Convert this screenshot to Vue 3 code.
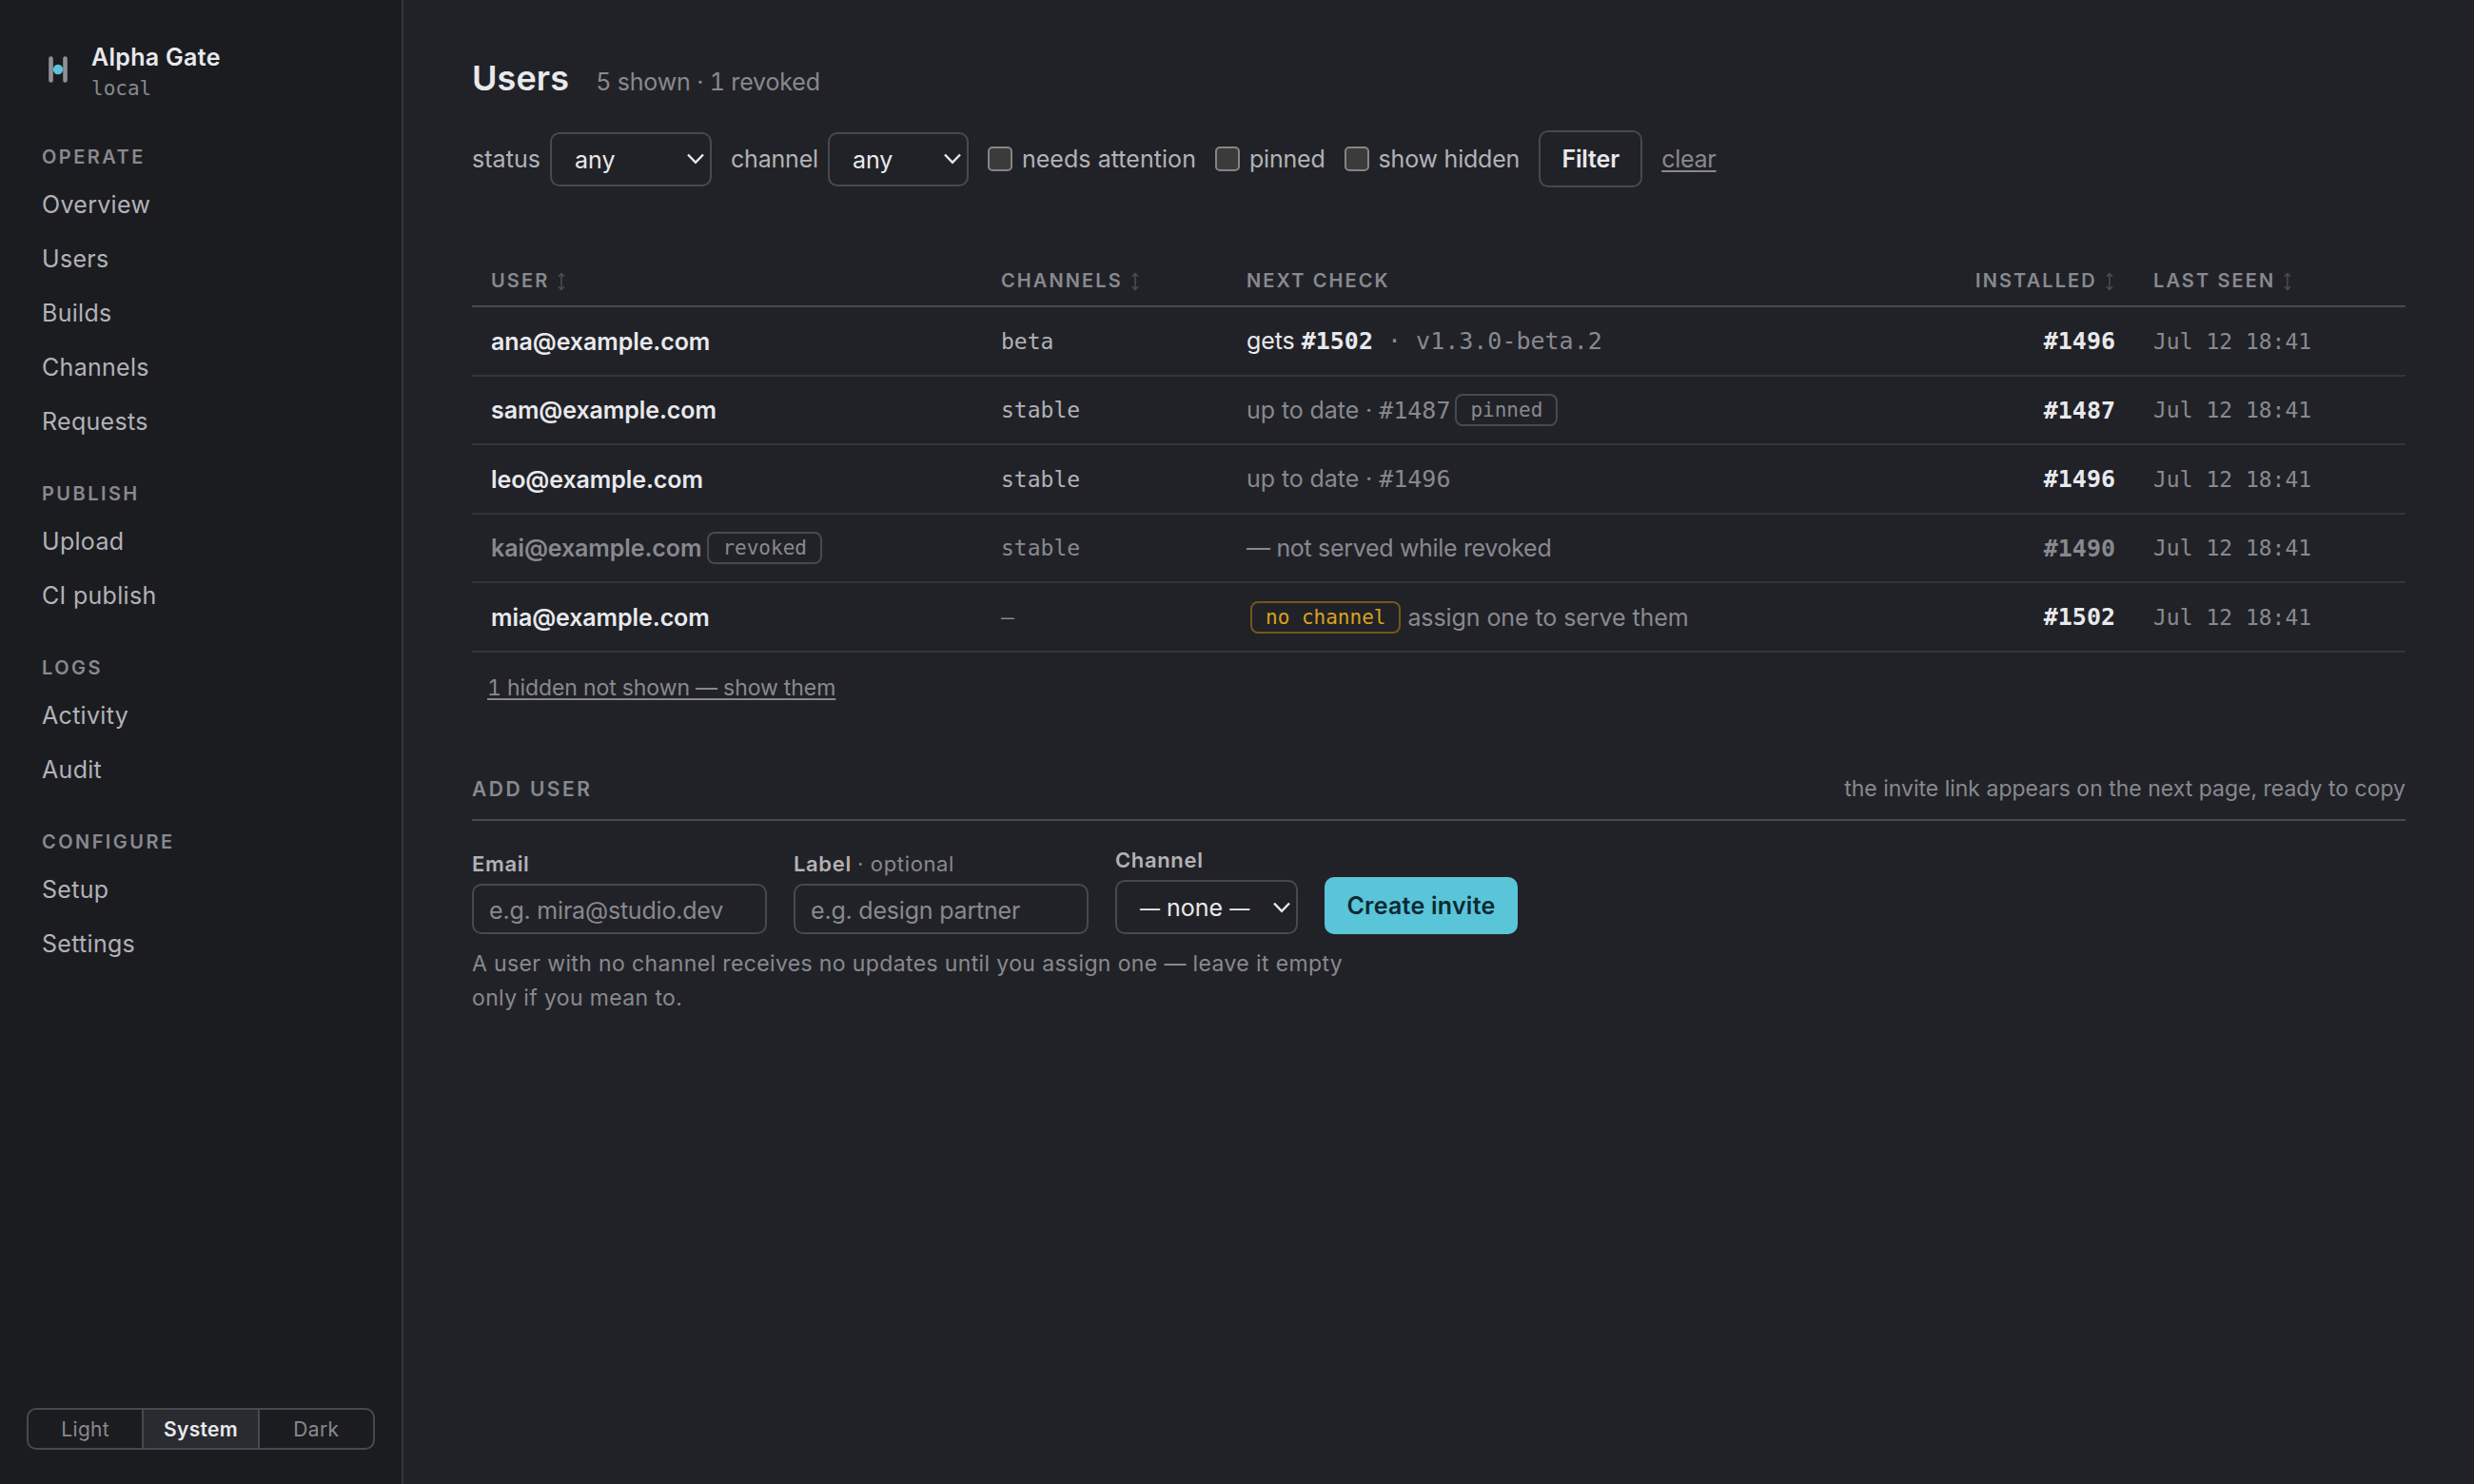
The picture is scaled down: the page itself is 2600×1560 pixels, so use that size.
<script setup>
import { ref } from 'vue'

const groups = [
  { title: 'Operate', links: ['Overview', 'Users', 'Builds', 'Channels', 'Requests'] },
  { title: 'Publish', links: ['Upload', 'CI publish'] },
  { title: 'Logs', links: ['Activity', 'Audit'] },
  { title: 'Configure', links: ['Setup', 'Settings'] },
]

const themes = ['Light', 'System', 'Dark']
const theme = ref('System')

const flags = ref([
  { text: 'needs attention', on: false },
  { text: 'pinned', on: false },
  { text: 'show hidden', on: false },
])

const columns = [
  { text: 'User', sort: true },
  { text: 'Channels', sort: true },
  { text: 'Next check' },
  { text: 'Installed', sort: true, right: true },
  { text: 'Last seen', sort: true },
]

const users = [
  { email: 'ana@example.com', channel: 'beta', next: 'gets', build: '#1502', version: 'v1.3.0-beta.2', installed: '#1496' },
  { email: 'sam@example.com', channel: 'stable', next: 'current', build: '#1487', pinned: true, installed: '#1487' },
  { email: 'leo@example.com', channel: 'stable', next: 'current', build: '#1496', installed: '#1496' },
  { email: 'kai@example.com', channel: 'stable', next: 'revoked', revoked: true, installed: '#1490' },
  { email: 'mia@example.com', channel: '', next: 'none', installed: '#1502' },
]
const lastSeen = 'Jul 12 18:41'

const email = ref('')
const label = ref('')
</script>

<template>
  <div class="app">
    <aside class="sidebar">
      <div class="brand">
        <svg class="logo" width="34" height="34" viewBox="0 0 34 34">
          <path d="M9.5 5.6v22.8M24.5 5.6v22.8" stroke="#8f9097" stroke-width="4.6" stroke-linecap="round" />
          <circle cx="17" cy="17" r="5.2" fill="#5ac4d8" />
        </svg>
        <div>
          <div class="brand-name">Alpha Gate</div>
          <div class="brand-env">local</div>
        </div>
      </div>

      <nav>
        <div v-for="group in groups" :key="group.title" class="group">
          <div class="group-title">{{ group.title }}</div>
          <a v-for="link in group.links" :key="link" class="link">{{ link }}</a>
        </div>
      </nav>

      <div class="themes">
        <button v-for="t in themes" :key="t" :class="{ on: t === theme }" @click="theme = t">{{ t }}</button>
      </div>
    </aside>

    <main class="main">
      <header class="head">
        <h1>Users</h1>
        <span class="count">5 shown · 1 revoked</span>
      </header>

      <div class="filters">
        <div class="pair">
          <span>status</span>
          <div class="select status">
            any
            <svg width="20" height="12" viewBox="0 0 20 12"><path d="M2 1.5l8 8.3 8-8.3" /></svg>
          </div>
        </div>
        <div class="pair tight">
          <span>channel</span>
          <div class="select channel">
            any
            <svg width="20" height="12" viewBox="0 0 20 12"><path d="M2 1.5l8 8.3 8-8.3" /></svg>
          </div>
        </div>
        <label v-for="(flag, i) in flags" :key="flag.text" class="pair" :class="{ tight: i > 0 }">
          <input v-model="flag.on" type="checkbox">
          <span>{{ flag.text }}</span>
        </label>
        <button class="filter">Filter</button>
        <a class="clear">clear</a>
      </div>

      <table>
        <colgroup>
          <col class="c-user"><col class="c-channel"><col class="c-next"><col class="c-inst"><col>
        </colgroup>
        <thead>
          <tr>
            <th v-for="col in columns" :key="col.text" :class="{ right: col.right }">
              {{ col.text }}
              <svg v-if="col.sort" width="8" height="20" viewBox="0 0 8 20"><path d="M4 1.5v17M1 4.8l3-3.3 3 3.3M1 15.2l3 3.3 3-3.3" /></svg>
            </th>
          </tr>
        </thead>
        <tbody>
          <tr v-for="user in users" :key="user.email" :class="{ revoked: user.revoked }">
            <td>
              <span class="email">{{ user.email }}</span>
              <span v-if="user.revoked" class="tag after">revoked</span>
            </td>
            <td class="mono small" :class="{ empty: !user.channel }">{{ user.channel || '–' }}</td>
            <td v-if="user.next === 'gets'">gets <b class="mono">{{ user.build }}</b><span class="mono muted version"> · {{ user.version }}</span></td>
            <td v-else-if="user.next === 'current'" class="muted">up to date · <span class="mono">{{ user.build }}</span><span v-if="user.pinned" class="tag pin">pinned</span></td>
            <td v-else-if="user.next === 'revoked'" class="muted unserved">— not served while revoked</td>
            <td v-else class="muted"><span class="tag warn">no channel</span> assign one to serve them</td>
            <td class="right"><b class="mono">{{ user.installed }}</b></td>
            <td class="mono small muted">{{ lastSeen }}</td>
          </tr>
        </tbody>
      </table>
      <a class="hidden-link">1 hidden not shown — show them</a>

      <section class="add">
        <div class="add-head">
          <h2>Add user</h2>
          <span>the invite link appears on the next page, ready to copy</span>
        </div>
        <form class="form" @submit.prevent>
          <label class="field">
            <span class="name">Email</span>
            <input v-model="email" type="text" placeholder="e.g. mira@studio.dev">
          </label>
          <label class="field">
            <span class="name">Label <em>· optional</em></span>
            <input v-model="label" type="text" placeholder="e.g. design partner">
          </label>
          <div class="field">
            <span class="name">Channel</span>
            <div class="select invite">
              <span><small>—</small> none <small>—</small></span>
              <svg width="20" height="12" viewBox="0 0 20 12"><path d="M2 1.5l8 8.3 8-8.3" /></svg>
            </div>
          </div>
          <button class="create">Create invite</button>
        </form>
        <p class="hint">A user with no channel receives no updates until you assign one — leave it empty only if you mean to.</p>
      </section>
    </main>
  </div>
</template>

<style>
body {
  margin: 0;
  background: #212227;
}
</style>

<style scoped>
* {
  box-sizing: border-box;
}
.app {
  display: flex;
  height: 1560px;
  font-family: Inter, sans-serif;
  font-size: 25px;
  letter-spacing: 0.3px;
  line-height: 38px;
  font-variation-settings: 'opsz' 14;
  color: #e8e9ed;
  background: #212227;
}
button, input {
  font: inherit;
  letter-spacing: inherit;
  font-variation-settings: inherit;
  color: inherit;
}
.mono {
  font-family: 'DejaVu Sans Mono', monospace;
  letter-spacing: 0;
}
.small {
  font-size: 23px;
}
.muted {
  color: #88898f;
}

/* sidebar */
.sidebar {
  display: flex;
  flex-direction: column;
  width: 424px;
  padding: 44px 28px 36px;
  background: #1b1c20;
  border-right: 2px solid #34353a;
}
.brand {
  display: flex;
  gap: 18px;
  padding-left: 16px;
}
.logo {
  margin-top: 12px;
}
.brand-name {
  font-weight: 600;
  line-height: 33px;
}
.brand-env {
  font-family: 'DejaVu Sans Mono', monospace;
  font-size: 21px;
  line-height: 32px;
  letter-spacing: 0;
  color: #88898f;
}
nav {
  flex: 1;
  margin-top: 9px;
  padding-left: 16px;
}
.group-title {
  margin: 32px 0 7px;
  font-size: 20px;
  font-weight: 600;
  line-height: 30px;
  letter-spacing: 2.45px;
  text-transform: uppercase;
  color: #88898f;
}
.link {
  display: block;
  line-height: 57px;
  color: #b1b2b7;
}
.themes {
  display: flex;
  width: 366px;
  height: 44px;
  border: 2px solid #48494f;
  border-radius: 10px;
  overflow: hidden;
}
.themes button {
  flex: 1;
  padding: 1px 0 0;
  border: 0;
  font-size: 21px;
  line-height: 39px;
  color: #88898f;
  background: none;
}
.themes button + button {
  border-left: 2px solid #48494f;
}
.themes .on {
  font-weight: 600;
  color: #e8e9ed;
  background: #2a2b30;
}

/* page head and filters */
.main {
  flex: 1;
  padding: 58px 72px 0;
}
.head {
  display: flex;
  align-items: baseline;
  gap: 28px;
  height: 48px;
}
h1 {
  margin: 0;
  font-size: 36px;
  font-weight: 600;
  line-height: 48px;
  letter-spacing: 0.1px;
}
.count {
  letter-spacing: -0.17px;
  font-variant-numeric: tabular-nums;
  color: #88898f;
}
.filters {
  display: flex;
  align-items: center;
  gap: 20px;
  height: 60px;
  margin-top: 31px;
  letter-spacing: 0.05px;
  color: #b1b2b7;
}
.pair {
  display: flex;
  align-items: center;
  gap: 10px;
}
.tight {
  letter-spacing: -0.2px;
}
.select {
  display: flex;
  align-items: center;
  justify-content: space-between;
  height: 57px;
  padding: 2px 5px 0 24px;
  border: 2px solid #48494f;
  border-radius: 10px;
  letter-spacing: 0;
  color: #e8e9ed;
}
.select svg {
  margin-top: -2px;
  fill: none;
  stroke: #e8e9ed;
  stroke-width: 2.4;
}
.status {
  width: 170px;
}
.channel {
  width: 148px;
}
.filters input {
  width: 26px;
  height: 26px;
  margin: 0;
  appearance: none;
  background: #3b3b3b;
  border: 2px solid #858585;
  border-radius: 5px;
}
.filter {
  width: 109px;
  height: 60px;
  padding: 0;
  font-weight: 600;
  letter-spacing: -0.15px;
  color: #e8e9ed;
  background: none;
  border: 2px solid #48494f;
  border-radius: 10px;
}
.clear, .hidden-link {
  color: #88898f;
  text-decoration: underline;
  text-decoration-thickness: 2px;
  text-underline-offset: 3px;
}
.clear {
  letter-spacing: -0.25px;
}

/* table */
table {
  width: 2032px;
  margin-top: 66px;
  border-collapse: separate;
  border-spacing: 0;
  table-layout: fixed;
}
.c-user {
  width: 536px;
}
.c-channel {
  width: 258px;
}
.c-next {
  width: 719px;
}
.c-inst {
  width: 234px;
}
th {
  height: 60px;
  padding: 5px 20px 0;
  font-size: 20px;
  font-weight: 600;
  line-height: 30px;
  letter-spacing: 2.1px;
  text-align: left;
  text-transform: uppercase;
  color: #88898f;
  border-bottom: 2px solid #48494f;
}
th svg {
  margin: 0 2px;
  vertical-align: -4px;
  fill: none;
  stroke: #4c4d53;
  stroke-width: 1.5;
}
td {
  height: 73px;
  padding: 0 20px;
  letter-spacing: -0.08px;
  white-space: nowrap;
  border-bottom: 2px solid #34353a;
}
tr:nth-child(even) td {
  height: 72px;
}
.right {
  text-align: right;
}
.email {
  font-weight: 600;
}
td.small {
  letter-spacing: 0;
  color: #b1b2b7;
}
td.muted, td.empty, .revoked td {
  color: #88898f;
}
td.unserved {
  letter-spacing: -0.32px;
}
.version {
  white-space: pre;
}
.tag {
  display: inline-block;
  height: 34px;
  margin-left: 4px;
  padding: 0 14px;
  font-family: 'DejaVu Sans Mono', monospace;
  font-size: 21px;
  line-height: 30px;
  letter-spacing: 0;
  vertical-align: 2px;
  color: #88898f;
  border: 2px solid #48494f;
  border-radius: 8px;
}
.tag.after {
  margin-left: 6px;
}
.tag.pin {
  margin-left: 5px;
}
.tag.warn {
  color: #d9a21e;
  border-color: #705819;
}
.hidden-link {
  display: block;
  width: fit-content;
  margin: 18px 0 0 16px;
  font-size: 23px;
  letter-spacing: -0.07px;
  font-variant-numeric: tabular-nums;
}

/* add user */
.add-head {
  display: flex;
  justify-content: space-between;
  height: 53px;
  margin-top: 68px;
  font-size: 23px;
  letter-spacing: 0;
  color: #88898f;
  border-bottom: 2px solid #48494f;
}
h2 {
  margin: 1px 0 0;
  font-size: 21px;
  font-weight: 600;
  letter-spacing: 2.5px;
  text-transform: uppercase;
}
.form {
  display: flex;
  align-items: flex-end;
  gap: 28px;
  height: 119px;
}
.field {
  display: flex;
  flex-direction: column;
  gap: 5px;
}
.name {
  font-size: 22px;
  font-weight: 600;
  line-height: 32px;
  letter-spacing: 0.65px;
  color: #b1b2b7;
}
.name em {
  font-style: normal;
  font-weight: 400;
  color: #88898f;
}
.field input {
  width: 310px;
  height: 53px;
  padding: 2px 16px 0;
  letter-spacing: -0.2px;
  background: none;
  border: 2px solid #48494f;
  border-radius: 10px;
}
.field input::placeholder {
  color: #88898f;
  opacity: 1;
}
.invite {
  width: 192px;
  white-space: nowrap;
}
.invite small {
  font-size: 21px;
}
.create {
  width: 203px;
  height: 60px;
  padding: 0;
  font-weight: 600;
  letter-spacing: 0.25px;
  color: #0b2a31;
  background: #5ac4d8;
  border: 0;
  border-radius: 10px;
}
.hint {
  width: 930px;
  margin: 13px 0 0;
  font-size: 23px;
  line-height: 36px;
  letter-spacing: 0.37px;
  color: #88898f;
}
</style>
